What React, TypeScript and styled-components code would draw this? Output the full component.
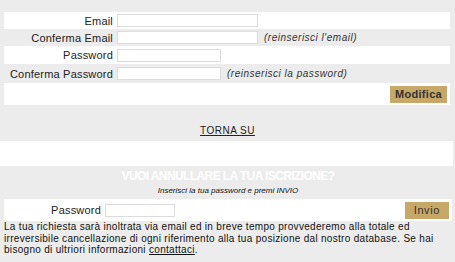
import styled, { createGlobalStyle } from 'styled-components';

const GlobalStyle = createGlobalStyle`
  html, body {
    margin: 0;
    padding: 0;
    background: #ececec;
  }
  body {
    font-family: "Liberation Sans", Arial, sans-serif;
    font-size: 11px;
    color: #222;
  }
`;

type Field = { label: string; wide: boolean; hint?: string };

const fields: Field[] = [
  { label: 'Email', wide: true },
  { label: 'Conferma Email', wide: true, hint: "(reinserisci l'email)" },
  { label: 'Password', wide: false },
  { label: 'Conferma Password', wide: false, hint: '(reinserisci la password)' },
];

const rowHeights = [17, 17, 18, 19];

function App() {
  return (
    <Page>
      <GlobalStyle />
      <FormTable>
        {fields.map((f, i) => (
          <Row key={f.label} $white={i % 2 === 0} $h={rowHeights[i]}>
            <Label>{f.label}</Label>
            <FieldCell>
              <TextInput type={f.label.includes('Password') ? 'password' : 'text'} $wide={f.wide} />
              {f.hint && <Hint>{f.hint}</Hint>}
            </FieldCell>
          </Row>
        ))}
        <ButtonRow>
          <Button $bold $pad={5}>Modifica</Button>
        </ButtonRow>
      </FormTable>

      <BackLink href="#">TORNA SU</BackLink>

      <Band />

      <CancelSection>
        <CancelTitle>VUOI ANNULLARE LA TUA ISCRIZIONE?</CancelTitle>
        <CancelSub>Inserisci la tua password e premi INVIO</CancelSub>
        <CancelRow>
          <CancelLabel>Password</CancelLabel>
          <TextInput type="password" $small />
          <Spacer />
          <Button $pad={9}>Invio</Button>
        </CancelRow>
        <Notice>
          La tua richiesta sarà inoltrata via email ed in breve tempo provvederemo alla totale ed
          irreversibile cancellazione di ogni riferimento alla tua posizione dal nostro database. Se hai
          bisogno di ultriori informazioni <NoticeLink href="#">contattaci</NoticeLink>.
        </Notice>
      </CancelSection>
    </Page>
  );
}
export default App;

const Page = styled.div`
  width: 455px;
  height: 262px;
  padding-top: 12px;
  box-sizing: border-box;
  overflow: hidden;
`;

const FormTable = styled.div`
  margin: 0 5px 0 4px;
  display: flex;
  flex-direction: column;
`;

const Row = styled.div<{ $white: boolean; $h: number }>`
  display: grid;
  grid-template-columns: 109px 1fr;
  column-gap: 4px;
  align-items: center;
  height: ${(p) => p.$h}px;
  background: ${(p) => (p.$white ? '#fff' : '#ececec')};
`;

const Label = styled.div`
  text-align: right;
  letter-spacing: 0.2px;
`;

const FieldCell = styled.div`
  display: flex;
  align-items: center;
  gap: 6px;
`;

const TextInput = styled.input<{ $wide?: boolean; $small?: boolean }>`
  box-sizing: border-box;
  width: ${(p) => (p.$small ? '70px' : p.$wide ? '141px' : '104px')};
  height: 13px;
  padding: 0;
  margin: 0;
  border: 1px solid #dcdcdc;
  background: #fff;
  outline: none;
`;

const Hint = styled.span`
  font-style: italic;
  font-size: 10px;
  letter-spacing: 0.5px;
  color: #333;
`;

const ButtonRow = styled.div`
  height: 22px;
  background: #fff;
  display: flex;
  align-items: center;
  justify-content: flex-end;
  padding-right: 3px;
`;

const Button = styled.button<{ $bold?: boolean; $pad: number }>`
  height: 17px;
  padding: 0 ${(p) => p.$pad}px;
  border: none;
  background: #c8a868;
  color: #333;
  font-family: inherit;
  font-size: 11px;
  font-weight: ${(p) => (p.$bold ? 700 : 400)};
  letter-spacing: ${(p) => (p.$bold ? 0.3 : 0.6)}px;
  cursor: pointer;
`;

const BackLink = styled.a`
  display: block;
  width: fit-content;
  margin: 20px auto 0;
  font-size: 10px;
  line-height: 12px;
  color: #222;
  letter-spacing: 0.5px;
  text-decoration: underline;
`;

const Band = styled.div`
  height: 25px;
  margin-top: 4px;
  margin-right: 2px;
  background: #fff;
`;

const CancelSection = styled.div`
  display: flex;
  flex-direction: column;
  padding: 3px 3px 0 4px;
`;

const CancelTitle = styled.div`
  text-align: center;
  font-weight: 700;
  font-size: 12px;
  line-height: 14px;
  letter-spacing: -0.6px;
  color: #fff;
`;

const CancelSub = styled.div`
  text-align: center;
  font-style: italic;
  font-size: 8px;
  line-height: 10px;
  margin-top: 3px;
  color: #111;
`;

const CancelRow = styled.div`
  margin-top: 3px;
  height: 22px;
  background: #fff;
  display: flex;
  align-items: center;
  padding-right: 3px;
`;

const CancelLabel = styled.span`
  width: 97px;
  text-align: right;
  margin-right: 4px;
  letter-spacing: 0.2px;
`;

const Spacer = styled.div`
  flex: 1;
`;

const Notice = styled.p`
  margin: 0;
  font-size: 10px;
  line-height: 11.5px;
  letter-spacing: 0.3px;
  color: #111;
`;

const NoticeLink = styled.a`
  color: #111;
  text-decoration: underline;
`;
